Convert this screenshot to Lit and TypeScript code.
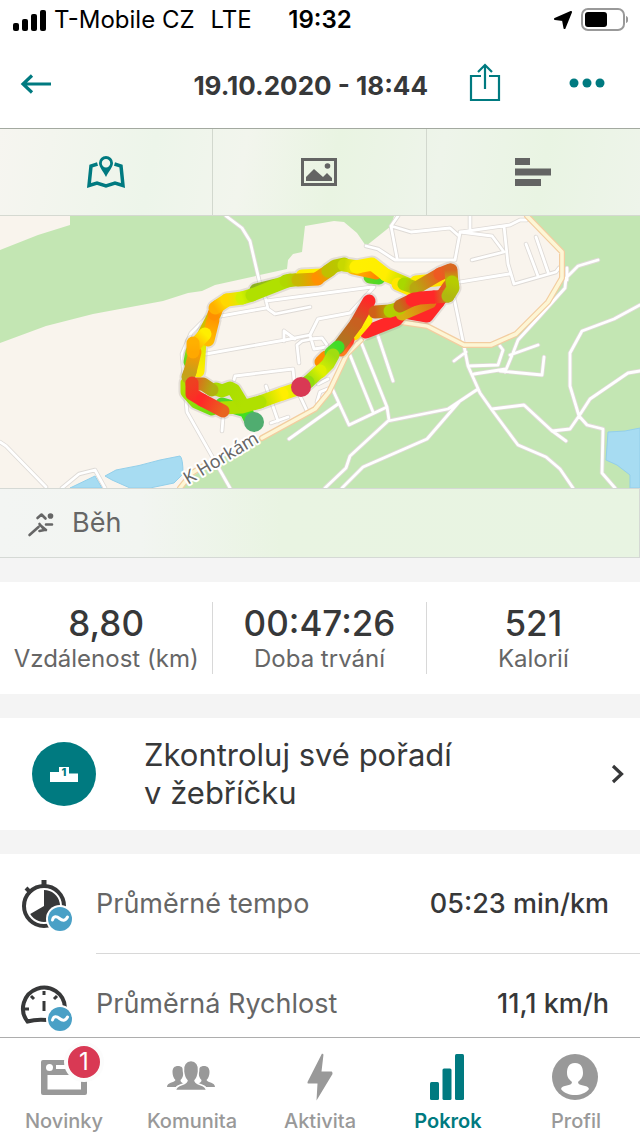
import { LitElement, html, svg, css } from "lit";
import { customElement, property, state } from "lit/decorators.js";
import { classMap } from "lit/directives/class-map.js";

const FOREST = [
  "M70 216 H640 V488 H182 L191 477 L240 447 L300 418 L326 400 L347 352 L395 321 L430 328 L465 346 L492 345 L515 335 L548 302 L561 276 V252 L527 216 H394 L391 226 L366 246 L357 233 L344 222 L334 221 L305 226 L302 252 L293 254 L288 260 L287 269 L215 285 L202 291 L188 293 L163 301 L93 314 L46 326 L0 343 V250 L38 235 L70 225Z",
];

const WATER = [
  "M105 476 L116 470 Q140 466 160 460 L180 456 Q183 458 183 474 L174 483 L150 488 H130 L112 480 Z",
  "M70 488 L95 476 L102 488Z",
  "M608 432 L625 431 L640 428 V488 H630 V475 L617 465 L606 460Z",
];

const SECONDARY = "M527 216 L562 252 V278 L548 302 L516 334 L491 345 H464 L427 326 L400 322 M361 340 L347 354 L329 392 L315 409 L262 438 M205 465 L192 473 L180 488";

const STREETS = [
  "M226 216 L242 228 L250 241 L260 284 L266 300 L268 309 L275 314 L310 307",
  "M266 301 L372 287",
  "M221 316 L266 308",
  "M225 303 L206 318 L191 333 L182 354 L187 412 L230 488",
  "M206 354 L285 340 L310 335 L318 319 L350 313 L374 287",
  "M284 331 V341 M284 331 L295 339",
  "M310 335 L314 349 L327 347 M310 339 L322 338 L327 345 M299 363 L297 345 L302 341 L312 339",
  "M234 380 L235 376 L293 369 L294 380",
  "M266 386 L278 421 M271 423 L288 417 M300 396 L307 411",
  "M223 418 L222 431",
  "M317 402 L320 392 L330 388 M318 384 L328 379",
  "M366 246 L378 249 L395 260 L455 260 L460 233",
  "M398 216 L391 226 L397 258",
  "M391 226 L411 232 L450 228 L459 236",
  "M461 232 L510 225 L520 220 L527 220 M460 232 L492 236 L504 252 L472 260",
  "M470 216 V230 M504 226 L508 264 L514 284 L556 272 L559 268",
  "M460 282 L509 274 M526 244 L538 276 M536 237 L548 272",
  "M598 260 L578 266 L566 278 L565 288 L540 316 L518 340 L513 353 L505 372",
  "M567 268 V280",
  "M454 298 L464 346 L468 366 L480 393 L492 410 L518 445 L546 457 L560 469 L573 488",
  "M468 366 L498 365 L503 350 L500 346 M474 374 L506 369 M500 371 L542 375 L544 357 M510 355 L538 345 M454 361 L466 352",
  "M640 305 L614 319 L582 331 L570 353 V386 L579 416 L587 425 L603 429 L602 473 L615 488",
  "M640 371 L628 373 L590 399 L579 416 L570 429 L552 431",
  "M492 409 L524 405 L551 430 L566 441",
  "M478 389 L448 409 L388 421 L350 456 L346 468 L325 488",
  "M459 402 L427 439 L363 467 L342 488",
  "M361 342 L387 407 L389 420 M378 336 L393 381",
  "M350 355 L373 412 M332 388 L349 425 L387 407",
  "M289 439 L338 404",
  "M0 442 L6 446 L46 487 M62 488 L79 474 L95 470 L105 488",
];

interface Segment {
  from: string;
  to: string;
  points: number[][];
}

const seg = (from: string, to: string, points: string): Segment => ({
  from,
  to,
  points: points.split(" ").map((p) => p.split(",").map(Number)),
});

const TRACK: Segment[] = [
  seg("#b0e000", "#70dd10", "187,383 187,392 196,402 212,409"),
  seg("#64d81e", "#90dd10", "190,362 192,352"),
  seg("#50d828", "#40e020", "222,404 246,411 250,419"),
  seg("#d0c800", "#d0b800", "198,346 215,313"),
  seg("#ffee00", "#d8e800", "198,371 200,340"),
  seg("#ff9800", "#ffbb00", "213,320 208,340"),
  seg("#ff9000", "#ffb800", "214,314 218,306"),
  seg("#ffb000", "#ffe600", "215,308 227,300"),
  seg("#ffd800", "#d8f000", "227,300 242,298"),
  seg("#8cb020", "#a0c418", "256,290 276,285"),
  seg("#d0f000", "#b0e000", "242,298 252,295"),
  seg("#b0e000", "#b0e000", "252,295 262,291 290,280"),
  seg("#b0d800", "#c8b800", "286,281 302,279"),
  seg("#ffee00", "#fff400", "302,276 322,275"),
  seg("#c8b800", "#ff9000", "298,280 318,279"),
  seg("#ff9000", "#c8b800", "318,278 330,270"),
  seg("#c0c000", "#b5cc00", "328,271 335,266 344,264"),
  seg("#60d820", "#50d828", "370,277 379,278"),
  seg("#ffb800", "#ff8800", "353,268 376,273"),
  seg("#c8d800", "#fff000", "344,265 358,267"),
  seg("#fff000", "#ffee00", "356,267 372,264 386,275"),
  seg("#ffee00", "#a8d800", "386,275 412,286"),
  seg("#ffe600", "#ffee00", "398,284 412,290"),
  seg("#ffee00", "#ffe000", "416,282 445,279"),
  seg("#a8d800", "#c0a810", "404,284 416,288"),
  seg("#b8a810", "#ee5a22", "416,288 440,274"),
  seg("#ee5a22", "#d86820", "440,274 450,270"),
  seg("#d86820", "#b6cc00", "451,270 452,284"),
  seg("#d86820", "#ff2828", "449,286 438,302"),
  seg("#ff2828", "#ff2828", "438,302 427,316 404,312"),
  seg("#ff2828", "#ff2828", "366,332 396,320 408,306"),
  seg("#d8b010", "#e07814", "402,314 430,302"),
  seg("#ffe000", "#fff400", "354,334 366,320"),
  seg("#ff3a28", "#ff7a22", "348,340 341,350"),
  seg("#ff2828", "#c86020", "369,301 356,324"),
  seg("#c86020", "#a87c20", "356,324 338,348"),
  seg("#d06018", "#b6b000", "375,312 390,311"),
  seg("#b0d000", "#b6cc00", "390,311 400,308"),
  seg("#c07018", "#ff2828", "400,306 414,299"),
  seg("#ff2828", "#ff2828", "412,300 420,298 434,297"),
  seg("#ff2828", "#c09018", "434,297 448,296"),
  seg("#b6cc00", "#b0b810", "452,282 453,288 448,296"),
  seg("#ff8c00", "#ff8c00", "321,362 326,357"),
  seg("#40dc28", "#60d828", "338,347 331,353"),
  seg("#a0dd10", "#dff000", "333,355 328,364 320,372"),
  seg("#dff000", "#90dc10", "320,371 308,382"),
  seg("#90dc10", "#b0e000", "308,382 301,387"),
  seg("#d8f000", "#ffee00", "300,388 282,394"),
  seg("#ffee00", "#b0e000", "282,394 260,402"),
  seg("#b0e000", "#b0e000", "260,402 242,407 222,408"),
  seg("#b0e000", "#a8dd00", "243,405 234,390 230,388 222,391 216,389"),
  seg("#c88a1c", "#c0a818", "190,372 188,377"),
  seg("#ff9800", "#c8a018", "195,352 190,372"),
  seg("#ffee00", "#ffb000", "205,334 194,346"),
  seg("#ffb000", "#ffa800", "193,343 193,352"),
  seg("#e85a20", "#b0b010", "192,384 203,384 212,390"),
  seg("#ee4020", "#ff2828", "192,383 192,394 202,400"),
  seg("#ff2828", "#e8641e", "202,400 223,411"),
];

const toPath = (points: number[][]) => "M" + points.map((p) => p.join(" ")).join("L");

const ICONS = {
  news: svg`<path fill-rule="evenodd" d="M-1 19h42a2 2 0 0 1 2 2v31a2 2 0 0 1-2 2H-1a2 2 0 0 1-2-2V21a2 2 0 0 1 2-2zM3.500 34v14.500h33.500V34z"/><circle cx="5.500" cy="26.500" r="3.500" fill="#fff"/><rect x="12" y="24" width="27" height="4" fill="#fff"/>`,
  community: svg`<path d="M-5 46c0-5 7-4 8.500-7-2-1.500-3-5-3-8 0-4 2-6 5.500-6s5.500 2 5.500 6c0 3-1 6.500-3 8 0 3 3 3 4 4-5 1-7 1-8.500 3z"/><path transform="translate(38 0) scale(-1 1)" d="M-5 46c0-5 7-4 8.500-7-2-1.500-3-5-3-8 0-4 2-6 5.500-6s5.500 2 5.500 6c0 3-1 6.500-3 8 0 3 3 3 4 4-5 1-7 1-8.500 3z"/><path stroke="#fff" stroke-width="1.500" d="M3.500 49.500c0-7 11.500-5 11.500-10-2-2-3-5-3.500-9C10.500 24 14 19.500 19 19.500s8.500 4.500 7.500 11c-.5 4-1.500 7-3.500 9 0 5 11.500 3 11.500 10z"/>`,
  activity: svg`<path d="M22 12.500L7.500 41c0 1 0 1.500 1 1.500h9l-1 17L32.500 33c0-2-.5-2.500-1.500-2.500h-9.500l2-17z"/>`,
  progress: svg`<rect x="2" y="41" width="9" height="18" rx="1.500"/><rect x="14.500" y="27.500" width="9" height="31.500" rx="1.500"/><rect x="27" y="13" width="9" height="46" rx="1.500"/>`,
  profile: svg`<circle cx="19" cy="36" r="23"/><path fill="#fff" d="M19 22c7 0 8 6 8 10 0 5-3 7-5 9 0 5 10 2 11 7-6 8-22 8-28 0 1-5 11-2 11-7-2-2-5-4-5-9 0-4 1-10 8-10z"/>`,
};

@customElement("activity-map")
export class ActivityMap extends LitElement {
  static styles = css`
    :host { display: block; background: #f9f4ed; }
    svg { display: block; width: 100%; height: 272px; }
    .forest { fill: #c3e6b3; }
    .water { fill: #a7dcf2; stroke: #93cfea; stroke-width: 1; }
    .line { fill: none; stroke-linecap: round; stroke-linejoin: round; }
    .casing { stroke: #dedad6; stroke-width: 4.500; }
    .street { stroke: #fff; stroke-width: 2.800; }
    .edge { stroke: #f3cda0; stroke-width: 6; }
    .main { stroke: #fdf6d5; stroke-width: 3.600; }
    .shade { stroke: #968c82; stroke-opacity: 0.220; stroke-width: 17; }
    .track { stroke-width: 13; }
    .name { font: 18px "Noto Sans", sans-serif; fill: #666; stroke: #fff; stroke-width: 4; paint-order: stroke; stroke-linejoin: round; }
  `;

  render() {
    return html`
      <svg viewBox="0 216 640 272" preserveAspectRatio="xMidYMid slice" role="img" aria-label="Mapa">
        <defs>
          ${TRACK.map(({ from, to, points }, i) => {
            const [x1, y1] = points[0];
            const [x2, y2] = points[points.length - 1];
            return svg`<linearGradient id=${`pace-${i}`} gradientUnits="userSpaceOnUse" x1=${x1} y1=${y1} x2=${x2} y2=${y2}><stop offset="0" stop-color=${from}/><stop offset="1" stop-color=${to}/></linearGradient>`;
          })}
        </defs>
        ${FOREST.map((d) => svg`<path class="forest" d=${d} />`)}
        ${WATER.map((d) => svg`<path class="water" d=${d} />`)}
        <path class="line casing" d=${STREETS.join(" ")} />
        <path class="line street" d=${STREETS.join(" ")} />
        <path class="line edge" d=${SECONDARY} />
        <path class="line main" d=${SECONDARY} />
        <path class="line shade" d=${TRACK.map(({ points }) => toPath(points)).join(" ")} />
        ${TRACK.map(({ points }, i) => svg`<path class="line track" stroke=${`url(#pace-${i})`} d=${toPath(points)} />`)}
        <circle cx="301" cy="387" r="10" fill="#d93954" />
        <circle cx="254" cy="422" r="10" fill="#50ad70" />
        <text class="name" transform="translate(188 485) rotate(-31)">K Horkám</text>
      </svg>
    `;
  }
}

@customElement("nav-item")
export class NavItem extends LitElement {
  static styles = css`
    :host { display: block; flex: 1 1 0; min-width: 0; }
    .item { display: flex; flex-direction: column; align-items: center; gap: 8px; color: #999; font: 500 20px/24px Inter, sans-serif; text-decoration: none; }
    .active { color: #007a80; font-weight: 600; }
    .glyph { position: relative; display: block; }
    svg { display: block; width: 48px; height: 48px; overflow: visible; fill: currentColor; }
    .badge { position: absolute; left: 24px; top: -11px; width: 32px; height: 32px; border-radius: 50%; border: 4px solid #fcfcfc; background: #d93954; color: #fff; font: 24px/32px Inter, sans-serif; text-align: center; }
  `;

  @property() icon: keyof typeof ICONS = "news";
  @property() label = "";
  @property({ type: Number }) count = 0;
  @property({ type: Boolean }) active = false;

  render() {
    return html`
      <a class=${classMap({ item: true, active: this.active })} href="#${this.icon}">
        <span class="glyph">
          <svg viewBox="-4 12 48 48" aria-hidden="true">${ICONS[this.icon]}</svg>
          ${this.count ? html`<span class="badge">${this.count}</span>` : ""}
        </span>
        <span>${this.label}</span>
      </a>
    `;
  }
}

@customElement("app-root")
export class AppRoot extends LitElement {
  static styles = css`
    :host { display: flex; flex-direction: column; height: 100vh; overflow: hidden; background: #f4f4f4; color: #373839; font-family: Inter, sans-serif; }
    * { box-sizing: border-box; }
    svg { display: block; flex: none; }
    button { margin: 0; padding: 0; border: 0; background: none; color: inherit; font: inherit; cursor: pointer; }
    .status { display: grid; grid-template-columns: 1fr auto 1fr; align-items: center; height: 40px; padding: 0 12px; background: #fff; color: #000; font-size: 24px; line-height: 28px; }
    .carrier, .power { display: flex; align-items: center; }
    .carrier { gap: 8px; white-space: nowrap; }
    .network { margin-left: 8px; }
    .clock { font-weight: 600; }
    .power { justify-content: flex-end; gap: 8px; }
    .head { display: flex; align-items: center; height: 89px; padding: 0 32px 0 20px; border-bottom: 1px solid #a3a9a0; background: #fff; color: #007a80; }
    .title { flex: 1; margin: 0; padding: 4px 40px 0 0; color: #373839; font-size: 26px; font-weight: 700; line-height: 36px; text-align: right; }
    .actions { display: flex; align-items: center; gap: 64px; }
    .tabs { display: grid; grid-template-columns: repeat(3, 1fr); height: 87px; border-bottom: 1px solid #d5d9d1; background: linear-gradient(100deg, #f6f5f0, #edf5ea 24%, #f2f5ed 38%, #e9f4e2 52%, #eef4ea 68%, #e9f4e3 84%, #eef4ea); }
    .tab { display: grid; place-items: center; color: #636463; }
    .tab:not(:last-child) { border-right: 1px solid #d2d8ce; }
    .tab.on { color: #007a80; }
    .sport { display: flex; align-items: center; gap: 16px; height: 70px; padding: 0 24px; border: solid #d5d9d5; border-width: 1px 1px 1px 0; background: linear-gradient(90deg, #f3f5f3, #f2f5f1 22%, #e9f4e2 44%, #e8f4e2); color: #666; font-size: 27px; line-height: 32px; }
    .stats { display: grid; grid-template-columns: repeat(3, 1fr); margin: 24px 0; padding: 20px 0; background: #fff; }
    .stat { display: flex; flex-direction: column; align-items: center; margin: 0; }
    .stat:not(:last-child) { border-right: 1px solid #d8d8d8; }
    .stat dt { order: 2; color: #666; font-size: 24px; line-height: 30px; white-space: nowrap; }
    .stat dd { margin: 0; font-size: 35px; font-weight: 500; line-height: 42px; }
    .rank { display: flex; align-items: center; min-height: 112px; padding: 0 16px 0 32px; background: #fff; color: #373839; text-decoration: none; font-size: 31px; line-height: 38px; }
    .rank-text { flex: 1; max-width: 400px; padding-left: 48px; }
    .podium { fill: #007a80; font: 800 11px Inter, sans-serif; text-anchor: middle; }
    .chevron { margin-left: auto; }
    .metrics { flex: 1; min-height: 0; margin: 24px 0 0; background: #fff; overflow: hidden; }
    .metric { display: flex; padding-left: 20px; }
    .metric svg { margin-top: 24px; }
    .row { flex: 1; display: flex; align-items: center; justify-content: space-between; height: 100px; margin-left: 20px; padding-right: 31px; border-bottom: 1px solid #d8d8d8; font-size: 27px; line-height: 32px; }
    .row dt { color: #666; }
    .row dd { margin: 0; font-weight: 500; }
    .nav { display: flex; height: 99px; padding-top: 15px; border-top: 1px solid #adadad; background: #fff; }
  `;

  @state() private tab = 0;

  private tabs = [
    { label: "Mapa", icon: html`<svg width="40" height="34" viewBox="0 0 40 34" fill="none" stroke="currentColor" stroke-width="3.500"><path d="M11.500 9L5 11 3 30.500l8-2.500 9 3 9-3 8 2.500L35 11l-6.500-2"/><path fill="currentColor" stroke="none" fill-rule="evenodd" d="M20 1a7 7 0 0 1 7 7c0 4-4 8-7 14-3-6-7-10-7-14a7 7 0 0 1 7-7zm0 3a4.200 4.200 0 1 0 0 8.400A4.200 4.200 0 0 0 20 4z"/></svg>` },
    { label: "Fotky", icon: html`<svg width="36" height="28" viewBox="0 0 36 28" fill="currentColor"><path fill-rule="evenodd" d="M0 0h36v28H0zM3 3v22h30V3z"/><path d="M5 23v-4l8-8 9 8 4-4 5 5v3z"/><circle cx="26.500" cy="8" r="2.800"/></svg>` },
    { label: "Grafy", icon: html`<svg width="36" height="28" viewBox="0 0 36 28" fill="currentColor"><path d="M0 0h15v7H0zM0 10.500h36v7H0zM0 21h26v7H0z"/></svg>` },
  ];

  private approx = svg`<g stroke="none"><circle cx="40" cy="41" r="14" fill="#fff"/><circle cx="40" cy="41" r="12" fill="#4aa0c6"/></g><path d="M32.500 42c1-4 4-4 7-1.500s6 2.500 8-1.500" fill="none" stroke="#fff" stroke-width="3" stroke-linecap="round"/>`;

  render() {
    return html`
      <div class="status">
        <div class="carrier">
          <svg width="34" height="21" viewBox="0 0 34 21"><rect x="1" y="13" width="6" height="8" rx="2"/><rect x="10" y="9" width="6" height="12" rx="2"/><rect x="19" y="4" width="6" height="17" rx="2"/><rect x="28" y="0" width="6" height="21" rx="2"/></svg>
          <span>T-Mobile CZ</span><span class="network">LTE</span>
        </div>
        <time class="clock">19:32</time>
        <div class="power">
          <svg width="18" height="18" viewBox="0 0 18 18" stroke="#000" stroke-linejoin="round"><path d="M17 1L10.500 17 9 9 1 8z" stroke-width="2"/></svg>
          <svg width="48" height="24" viewBox="0 0 48 24"><rect x="2" y="1" width="42" height="21" rx="6" fill="none" stroke="#999" stroke-width="2"/><rect x="5" y="4" width="22" height="15" rx="3"/><path d="M46 8c3 1 3 6 0 7z" fill="#999"/></svg>
        </div>
      </div>
      <header class="head">
        <button aria-label="Zpět"><svg width="32" height="20" viewBox="0 0 32 20" fill="none" stroke="currentColor" stroke-width="3.200"><path d="M3 10h28M12 1.500L3 10l9 8.500"/></svg></button>
        <h1 class="title">19.10.2020 - 18:44</h1>
        <div class="actions">
          <button aria-label="Sdílet"><svg width="36" height="44" viewBox="0 0 36 44" fill="none" stroke="currentColor" stroke-width="2.200"><path d="M13 14H3v24h28V14H21"/><path d="M17 27V3M10 10l7-7 7 7"/></svg></button>
          <button aria-label="Další"><svg width="40" height="12" viewBox="0 0 40 12" fill="currentColor"><circle cx="6" cy="5" r="4.500"/><circle cx="19" cy="5" r="4.500"/><circle cx="32" cy="5" r="4.500"/></svg></button>
        </div>
      </header>
      <nav class="tabs">
        ${this.tabs.map((t, i) => html`<button class=${classMap({ tab: true, on: i === this.tab })} aria-label=${t.label} @click=${() => (this.tab = i)}>${t.icon}</button>`)}
      </nav>
      <activity-map></activity-map>
      <div class="sport">
        <svg width="32" height="28" viewBox="0 0 32 28" fill="none" stroke="currentColor" stroke-width="2.600" stroke-linecap="round" stroke-linejoin="round"><circle cx="26.500" cy="7" r="2.800" fill="currentColor" stroke="none"/><path d="M13.500 9l4-3.500 4 4M5.500 26l9-8M22 15.500h6M15.500 15l5 6-5 1M16 16l6 5"/></svg>
        <span>Běh</span>
      </div>
      <dl class="stats">
        ${[["Vzdálenost (km)", "8,80"], ["Doba trvání", "00:47:26"], ["Kalorií", "521"]].map(([k, v]) => html`<div class="stat"><dt>${k}</dt><dd>${v}</dd></div>`)}
      </dl>
      <a class="rank" href="#zebricek">
        <svg width="64" height="64" viewBox="0 0 64 64"><circle cx="32" cy="32" r="32" fill="#007a80"/><path d="M18 30h9v-5h10v6.500h9V40H18z" fill="#fff"/><text class="podium" x="32" y="34">1</text></svg>
        <span class="rank-text">Zkontroluj své pořadí v&nbsp;žebříčku</span>
        <svg class="chevron" width="16" height="22" viewBox="0 0 16 22" fill="none" stroke="currentColor" stroke-width="3.200"><path d="M5 3l8.500 8L5 19"/></svg>
      </a>
      <dl class="metrics">
        <div class="metric">
          <svg width="56" height="56" viewBox="0 0 56 56" fill="none" stroke="#373839" stroke-width="4"><circle cx="24" cy="28" r="20"/><path d="M24 8V2" stroke-width="5"/><path d="M6 10l5 5"/><path d="M24 28V12a16 16 0 1 1-13.800 24z" fill="#373839" stroke="none"/>${this.approx}</svg>
          <div class="row"><dt>Průměrné tempo</dt><dd>05:23 min/km</dd></div>
        </div>
        <div class="metric">
          <svg width="56" height="56" viewBox="0 0 56 56" fill="none" stroke="#373839" stroke-width="4"><path d="M45 30A21 21 0 1 0 7.500 43.500Q16 41 27 42"/><path d="M24 13v4M11 18l3 3M37 18l-3 3M4 31h5M24 23v10" stroke-width="3"/>${this.approx}</svg>
          <div class="row"><dt>Průměrná Rychlost</dt><dd>11,1 km/h</dd></div>
        </div>
      </dl>
      <nav class="nav">
        <nav-item icon="news" label="Novinky" count="1"></nav-item>
        <nav-item icon="community" label="Komunita"></nav-item>
        <nav-item icon="activity" label="Aktivita"></nav-item>
        <nav-item icon="progress" label="Pokrok" active></nav-item>
        <nav-item icon="profile" label="Profil"></nav-item>
      </nav>
    `;
  }
}
